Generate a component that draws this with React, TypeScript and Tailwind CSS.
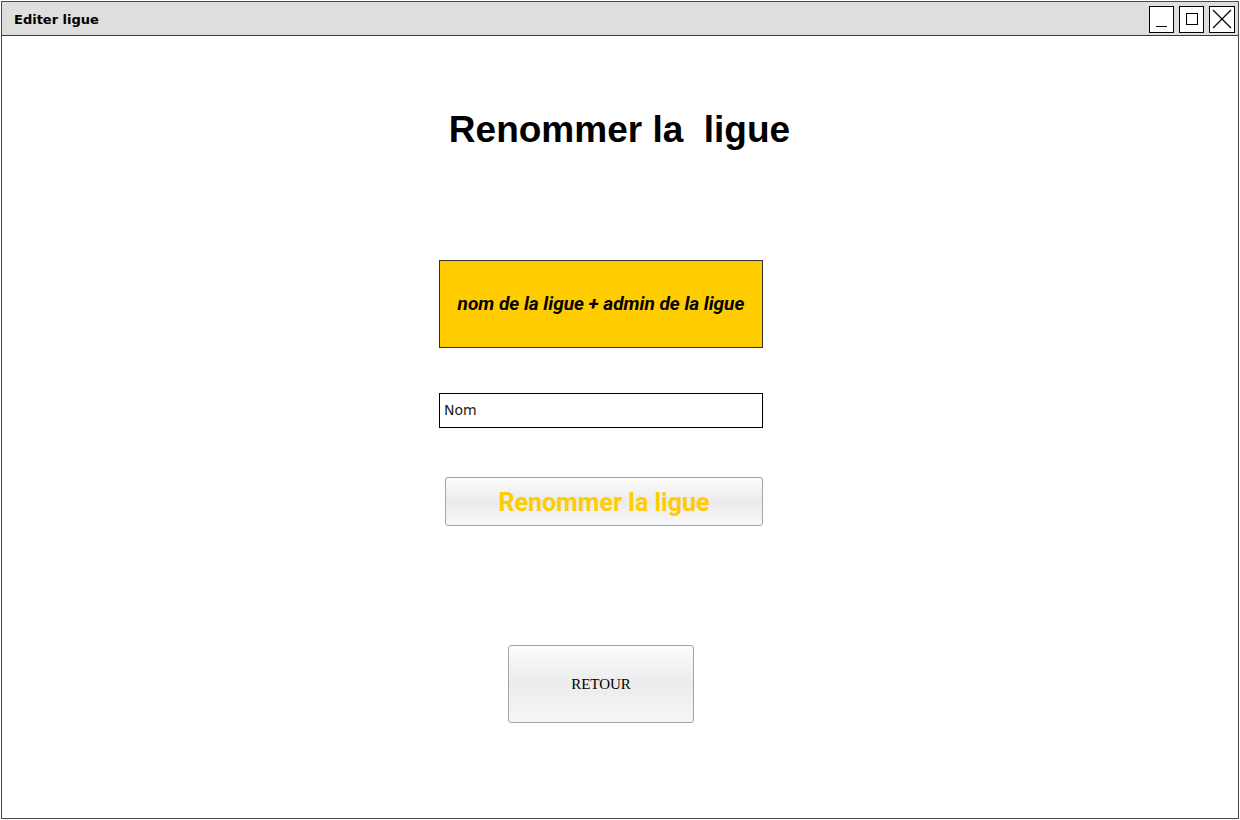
import React from "react";

export default function App() {
  return (
    <div className="w-[1240px] h-[820px] bg-white pl-px pt-px">
      <div className="w-[1238px] h-[818px] border border-[#4a4a4a] bg-white flex flex-col">
        <div className="h-[34px] bg-[#dedede] border-b border-[#3a3a3a] flex items-center justify-between pl-[12px] pr-[3px]">
          <span className="text-[13px] text-black font-bold pt-[2px]" style={{ fontFamily: '"Comic Sans MS", "DejaVu Sans", sans-serif' }}>
            Editer ligue
          </span>
          <div className="flex gap-[5px] pt-[1px]">
            <div className="w-[25px] h-[27px] border border-black bg-white flex items-end justify-center pb-[5px]">
              <div className="w-[11px] h-px bg-black" />
            </div>
            <div className="w-[25px] h-[27px] border border-black bg-white flex items-center justify-center">
              <div className="w-[12px] h-[12px] border border-black" />
            </div>
            <div className="w-[26px] h-[27px] border border-black bg-white flex items-center justify-center">
              <svg width="20" height="20" viewBox="0 0 20 20">
                <path d="M1 1 L19 19 M19 1 L1 19" stroke="black" strokeWidth="1.2" fill="none" />
              </svg>
            </div>
          </div>
        </div>
        <div className="flex flex-col">
          <div
            className="mt-[75px] h-[37px] text-[37px] leading-[37px] font-bold text-black text-center whitespace-pre pr-[1px]"
            style={{ fontFamily: '"Liberation Sans", Arial, sans-serif' }}
          >
            Renommer la  ligue
          </div>
          <div className="pl-[437px] flex flex-col items-start">
            <div
              className="mt-[112px] w-[324px] h-[88px] bg-[#ffcc00] border border-[#333] flex items-center justify-center text-[19px] font-bold italic text-black"
              style={{ fontFamily: 'Roboto, sans-serif' }}
            >
              nom de la ligue + admin de la ligue
            </div>
            <div
              className="mt-[45px] w-[324px] h-[35px] border border-black bg-white flex items-center pl-[4px] text-[14px] text-[#222]"
              style={{ fontFamily: '"DejaVu Sans", sans-serif' }}
            >
              Nom
            </div>
            <div
              className="mt-[49px] ml-[6px] w-[318px] h-[49px] rounded-[3px] border border-[#aaa399] bg-gradient-to-b from-[#fcfcfc] via-[#ebebeb] to-[#f6f6f6] flex items-center justify-center text-[25px] font-bold text-[#ffcc00] pt-[2px]"
              style={{ fontFamily: 'Roboto, sans-serif' }}
            >
              Renommer la ligue
            </div>
            <div
              className="mt-[119px] ml-[69px] w-[186px] h-[78px] rounded-[3px] border border-[#aaa399] bg-gradient-to-b from-[#fcfcfc] via-[#ebebeb] to-[#f6f6f6] flex items-center justify-center text-[15px] text-black"
              style={{ fontFamily: '"Liberation Serif", "Times New Roman", serif' }}
            >
              RETOUR
            </div>
          </div>
        </div>
      </div>
    </div>
  );
}
